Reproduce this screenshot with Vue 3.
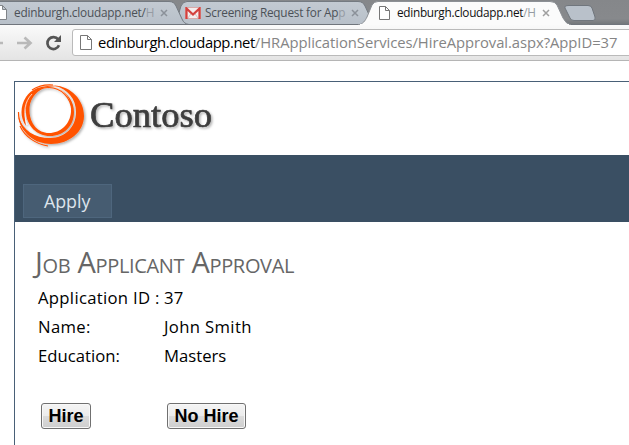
<script setup>
const fields = [
  { label: 'Application ID :', value: '37', tone: 'wide' },
  { label: 'Name:', value: 'John Smith', tone: 'name' },
  { label: 'Education:', value: 'Masters', tone: 'plain' },
]
</script>

<template>
  <div class="window">
    <div class="tabstrip">
      <svg class="tabshapes" width="629" height="25" viewBox="0 0 629 25">
        <defs>
          <linearGradient id="frame" x1="0" y1="0" x2="0" y2="1">
            <stop offset="0" stop-color="#85878a" />
            <stop offset="0.75" stop-color="#87898c" />
            <stop offset="1" stop-color="#717579" />
          </linearGradient>
          <linearGradient id="idle" x1="0" y1="0" x2="0" y2="1">
            <stop offset="0" stop-color="#c3cad2" />
            <stop offset="1" stop-color="#b8c0c9" />
          </linearGradient>
        </defs>
        <rect width="629" height="25" fill="url(#frame)" />
        <path d="M168 24.500C174 24 176 21 178 16L181 6Q183 1.500 187 1.500H358Q363 1.500 365 6L371 19Q373 24 379 24.500Z" fill="url(#idle)" stroke="#747a81" />
        <path d="M-4 1.500H169Q174 1.500 176 6L182 19Q184 24 189 24.500H-4Z" fill="url(#idle)" stroke="#747a81" />
        <path d="M0 24.500H629" stroke="#70757c" />
        <path d="M358 25C363 24 365 21 367 17L372 5Q374 1.500 378 1.500H550Q555 1.500 557 5L563 18Q566 24 571 25Z" fill="#fbfbfb" stroke="#8c9095" />
        <path d="M360 25H569" stroke="#fbfbfb" stroke-width="2" />
        <path d="M569 5.500H588Q591 5.500 592 8L595 17Q596 20.500 593 20.500H574Q571 20.500 570 18L565 8Q564 5.500 569 5.500Z" fill="#b9c1ca" stroke="#70767d" />
      </svg>
      <div class="tabs">
        <div class="tab first">
          <svg class="doc" width="12" height="15" viewBox="0 0 12 15"><path d="M.5.5H7.500L11.500 4.500V14.500H.5ZM7.500.5V4.500H11.500" fill="#fff" stroke="#808488" /></svg>
          <span class="title">edinburgh.cloudapp.net/<i>H</i></span>
          <svg class="close" width="8" height="8" viewBox="0 0 8 8"><path d="M1 1L7 7M7 1L1 7" stroke="#8b9199" stroke-width="1.500" /></svg>
        </div>
        <div class="tab second">
          <svg class="mail" width="16" height="12" viewBox="0 0 16 12">
            <rect x=".5" y=".5" width="15" height="11" fill="#f4ecec" stroke="#d9aaa9" />
            <path d="M3 11L6.500 6M13 11L9.500 6" stroke="#d5c0c0" />
            <path d="M1.500 12V1.500L8 7.500L14.500 1.500V12" fill="none" stroke="#d4403d" stroke-width="2.200" />
          </svg>
          <span class="title">Screening Request for Ap<i>p</i></span>
          <svg class="close" width="8" height="8" viewBox="0 0 8 8"><path d="M1 1L7 7M7 1L1 7" stroke="#8b9199" stroke-width="1.500" /></svg>
        </div>
        <div class="tab active">
          <svg class="doc" width="11" height="14" viewBox="0 0 11 14"><path d="M.5.5H6.500L10.500 4.500V13.500H.5ZM6.500.5V4.500H10.500" fill="#fff" stroke="#777" /></svg>
          <span class="title">edinburgh.cloudapp.net<i>/H</i></span>
          <svg class="close" width="8" height="8" viewBox="0 0 8 8"><path d="M1 1L7 7M7 1L1 7" stroke="#a0a0a0" stroke-width="1.500" /></svg>
        </div>
      </div>
    </div>

    <div class="toolbar">
      <svg class="controls" width="72" height="36" viewBox="0 0 72 36">
        <path d="M0 18H3" stroke="#b9b9b9" stroke-width="2.500" />
        <path d="M17 18H30M24.500 12.500L30.500 18L24.500 23.500" fill="none" stroke="#b9b9b9" stroke-width="2.700" />
        <path d="M58.200 14.400A6 6 0 1 0 59 20.300" fill="none" stroke="#555" stroke-width="2.700" />
        <path d="M61 10V17H54Z" fill="#555" />
      </svg>
      <div class="omnibox">
        <svg width="12" height="15" viewBox="0 0 12 15"><path d="M.5.5H7.500L11.500 4.500V14.500H.5ZM7.500.5V4.500H11.500" fill="#fff" stroke="#777" /></svg>
        <span class="url"><b>edinburgh.cloudapp.net</b><span class="path">/HRApplicationServices/HireApproval.aspx?AppID=37</span></span>
      </div>
    </div>

    <div class="page">
      <header class="brand">
        <svg width="215" height="73" viewBox="0 0 215 73">
          <defs>
            <filter id="shade" x="-10%" y="-10%" width="125%" height="130%">
              <feDropShadow dx="1.500" dy="1.500" stdDeviation="1" flood-color="#000" flood-opacity=".3" />
            </filter>
          </defs>
          <g filter="url(#shade)">
            <path fill="#ff5305" d="M39 3.500C56 4 69 18 69 34C69 50 54 62 36 62C20 62 6 51 3 34C8 49 20 56 35 56C50 56 61 45 61 30C61 17 53 7 39 3.500Z" />
            <path fill="#ff5305" d="M44 7C53 11 59 20 59 30C59 44 49 54 35 54C22 54 12 44 11 31C10 18 18 8 29 6C20 10 14 18 14.500 29C15 42 23 51 34 51C46 51 55 42 56 30C57 20 53 12 44 7Z" />
            <path fill="#ff5305" d="M47 5C35 2 18 4 11 15C5 24 5 36 11 44C8 30 11 17 20 10C27 5 37 3 47 5Z" />
            <path fill="none" stroke="#ff5305" stroke-width="1.200" d="M12 28C12 16 20 6 33 5.500C46 5 56 16 57 29M3.500 30C3 42 11 53 23 59M5 44C10 55 21 62 33 64M17 8Q26 2 38 3" />
            <path fill="none" stroke="#fff" stroke-width=".7" d="M17 12C9 20 8 32 12 43" />
          </g>
          <text class="wordmark" x="75" y="45" textLength="122" lengthAdjust="spacingAndGlyphs" filter="url(#shade)">Contoso</text>
        </svg>
      </header>
      <nav class="menu"><a class="item">Apply</a></nav>
      <main class="content">
        <h2>Job Applicant Approval</h2>
        <div class="form">
          <template v-for="field in fields" :key="field.label">
            <span :class="field.tone">{{ field.label }}</span><span :class="field.tone">{{ field.value }}</span>
          </template>
        </div>
        <div class="actions">
          <button class="hire">Hire</button>
          <button class="nohire">No Hire</button>
        </div>
      </main>
    </div>
  </div>
</template>

<style>
body { margin: 0; background: #fff; overflow: hidden; }
</style>

<style scoped>
.window { width: 629px; height: 445px; overflow: hidden; background: #fff; font-family: "Open Sans", "Noto Sans", sans-serif; color: #000; }
.tabstrip { position: relative; height: 25px; }
.tabshapes { position: absolute; left: 0; top: 0; display: block; }
.tabs { position: relative; display: flex; height: 25px; }
.tab { display: flex; align-items: center; box-sizing: border-box; height: 25px; font-size: 11.8px; color: #4c5157; white-space: nowrap; flex: none; }
.tab i { font-style: normal; color: #969ba3; }
.tab svg { flex: none; }
.title { line-height: 25px; height: 25px; flex: none; letter-spacing: -0.22px; }
.first { width: 185px; padding-left: 0; }
.first .doc { margin-left: -5px; }
.first .title { width: 142px; margin-left: 7px; }
.first .close { margin-left: 4px; }
.second { width: 193px; }
.second .title { width: 141px; margin-left: 4px; }
.second .close { margin-left: 5px; }
.active { width: 180px; color: #111; padding-left: 1px; }
.active .title { width: 141px; margin-left: 7px; letter-spacing: -0.28px; }
.active .close { margin-left: 4px; }
.toolbar { display: flex; align-items: center; height: 36px; box-sizing: border-box; background: linear-gradient(#fafafa, #e4e4e4); border-bottom: 1px solid #b5b5b5; }
.controls { flex: none; }
.omnibox { display: flex; align-items: center; box-sizing: border-box; width: 570px; height: 27px; padding-left: 7px; flex: none; border: 1px solid #bababa; border-radius: 3px; background: #fff; }
.url { margin-left: 6px; font-size: 14.8px; line-height: 22px; padding-bottom: 2px; white-space: nowrap; }
.url b { font-weight: 400; letter-spacing: -0.42px; }
.path { color: #858585; letter-spacing: -0.05px; }
.page { margin: 20px 0 0 14px; border: 1px solid #496077; border-right: 0; height: 380px; }
.brand { height: 73px; }
.brand svg { display: block; }
.wordmark { font: 36px "Liberation Serif", serif; fill: #3d3d3d; stroke: #3d3d3d; stroke-width: 0.7px; }
.menu { box-sizing: border-box; height: 67px; padding: 29px 0 0 8px; background: #3a4f63; }
.item { display: block; box-sizing: border-box; width: 89px; height: 34px; padding-left: 20px; border: 1px solid #4e667d; background: #465c71; color: #dde4ec; font-size: 17.8px; line-height: 33px; }
.content { padding: 22px 0 0 20px; }
h2 { margin: 0; height: 39px; font-size: 29px; line-height: 35px; font-weight: 400; font-variant: small-caps; color: #666; white-space: nowrap; letter-spacing: -0.33px; }
.form { display: grid; grid-template-columns: 126px 1fr; grid-auto-rows: 29px; padding-left: 3px; font-size: 16.7px; line-height: 29px; white-space: nowrap; }
.wide { letter-spacing: 0.3px; }
.name { letter-spacing: 0.35px; }
.actions { display: grid; grid-template-columns: 126px 1fr; justify-items: start; padding: 33px 0 0 6px; }
button { height: 26px; padding: 0; border: 1px solid #707070; border-radius: 3px; background: linear-gradient(#f4f4f4 0, #ececec 49%, #dcdcdc 50%, #cecece 100%); box-shadow: inset 0 0 0 1px #f8f8f8; color: #000; font: bold 18px/24px "Liberation Sans", sans-serif; }
.hire { width: 50px; }
.nohire { width: 79px; }
</style>
